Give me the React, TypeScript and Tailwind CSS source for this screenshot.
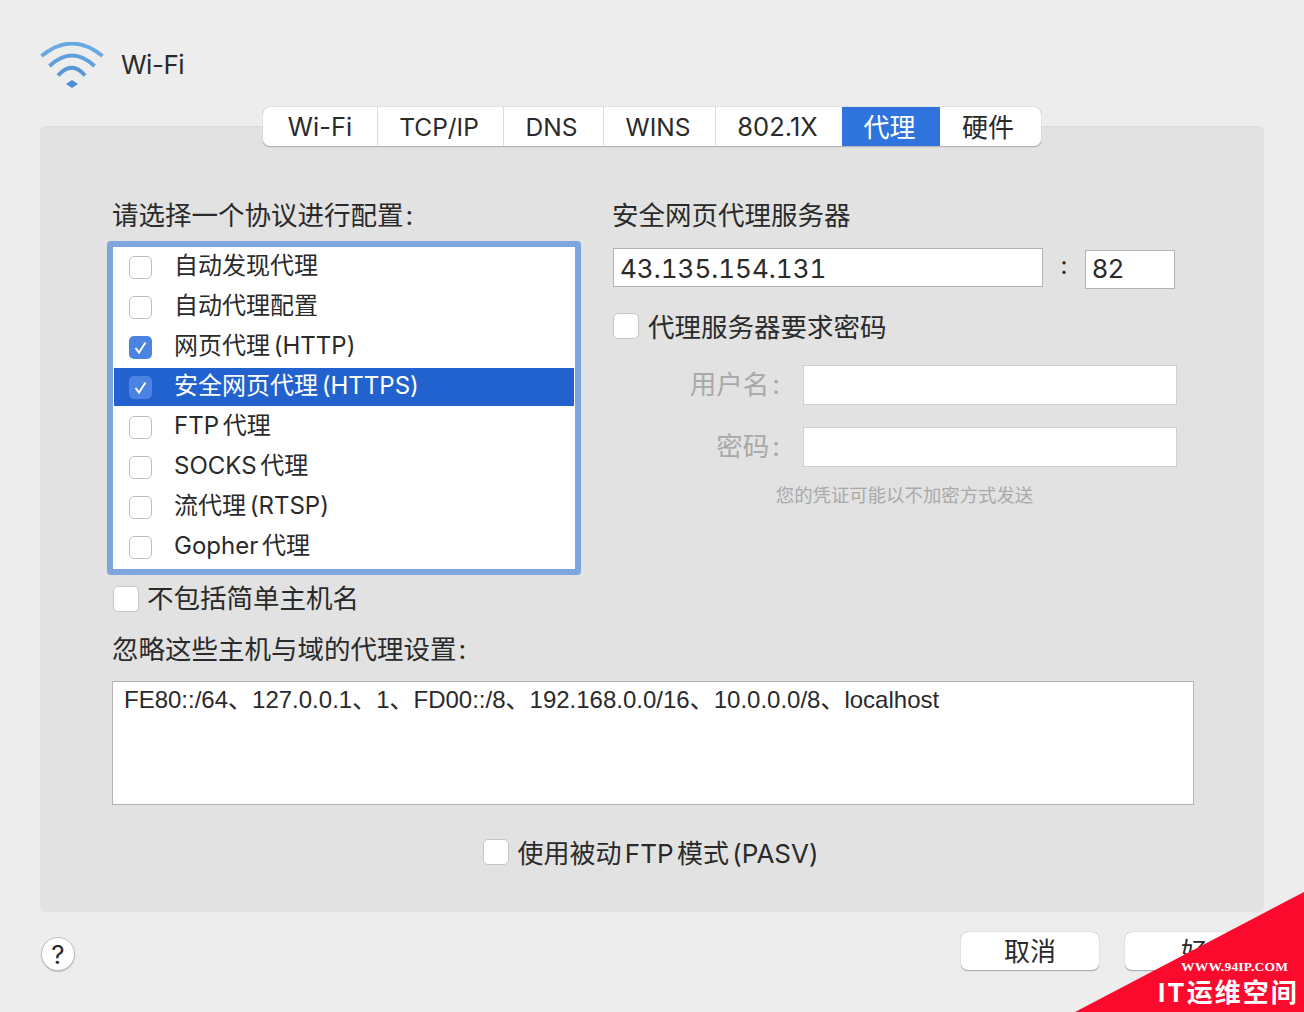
const tabs = [
  { label: 'Wi-Fi', width: 'w-[114px]', size: 'text-[25.5px]' },
  { label: 'TCP/IP', width: 'w-[126px] pr-[3px]', size: 'text-[24.5px]' },
  { label: 'DNS', width: 'w-[100px] pr-[4px]', size: 'text-[24.5px]' },
  { label: 'WINS', width: 'w-[112px] pr-[3px]', size: 'text-[24.5px]' },
  { label: '802.1X', width: 'w-[127px] pr-[3px]', size: 'text-[25.5px]' },
  { label: '代理', width: 'w-[98px] pr-[3px]', size: 'text-[26px]', active: true },
  { label: '硬件', width: 'w-[101px] pr-[5px]', size: 'text-[26px]' },
]

const protocols = [
  { label: '自动发现代理' },
  { label: '自动代理配置' },
  { label: '网页代理 (HTTP)', checked: true },
  { label: '安全网页代理 (HTTPS)', checked: true, selected: true },
  { label: 'FTP 代理' },
  { label: 'SOCKS 代理' },
  { label: '流代理 (RTSP)' },
  { label: 'Gopher 代理' },
]

function WifiIcon() {
  return (
    <svg width="64" height="46" viewBox="0 0 64 46" fill="none" className="shrink-0">
      <path d="M1.5 14 Q32 -11 62.5 14" stroke="#69a8e1" strokeWidth="3.8" />
      <path d="M9.5 24 Q32 3 54.5 24" stroke="#5f9fdb" strokeWidth="3.8" />
      <path d="M18 33.5 Q32 18 45 33.5" stroke="#5896d6" strokeWidth="3.8" />
      <path d="M26 42 L32 38 L38 42 L32 46Z" fill="#4d8cd2" />
    </svg>
  )
}

function ListCheck({ checked }: { checked?: boolean }) {
  if (checked) {
    return (
      <span className="flex h-[23px] w-[23px] shrink-0 items-center justify-center rounded-[5px] bg-[#4b83e2]">
        <svg width="15" height="15" viewBox="0 0 15 15" fill="none">
          <path d="M2.5 8 L6 12.5 L12.5 2.5" stroke="white" strokeWidth="1.9" />
        </svg>
      </span>
    )
  }
  return <span className="h-[23px] w-[23px] shrink-0 rounded-[5px] border border-[#bebebe] bg-white" />
}

function Checkbox() {
  return <span className="h-[26px] w-[26px] shrink-0 rounded-[5px] border border-[#c6c6c6] bg-white" />
}

export default function App() {
  return (
    <div className="relative h-[1012px] w-[1304px] overflow-hidden bg-[#ededed] font-[Inter,'Noto_Sans_CJK_SC',sans-serif] text-[#2a2a2a]">
      <header className="flex h-[126px] items-start gap-[17px] pl-[40px] pt-[42px]">
        <WifiIcon />
        <span className="text-[26px] leading-[46px] tracking-[-0.5px]">Wi-Fi</span>
      </header>

      <main className="mx-[40px] h-[786px] rounded-[6px] border-t border-[#dcdcdc] bg-[#e2e2e2] px-[73px]">
        <nav className="-mt-[20px] flex justify-center">
          <div className="flex h-[40px] overflow-hidden rounded-[7px] border-b border-[#b5b5b5] bg-white shadow-[0_0_1px_rgba(0,0,0,0.45)]">
            {tabs.map((tab, i) => (
              <span
                key={tab.label}
                className={`${tab.width} ${tab.size} flex items-center justify-center pt-[1px] ${
                  tab.active ? 'bg-[#2f74dc] text-white' : i > 0 && i < 5 ? 'border-l border-[#dcdcdc]' : ''
                }`}
              >
                {tab.label}
              </span>
            ))}
          </div>
        </nav>

        <div className="mt-[52px] flex">
          <section className="w-[500px]">
            <h2 className="-ml-[1px] h-[32px] text-[26.5px] font-normal leading-[32px]">
              请选择一个协议进行配置<span className="ml-[2px]">:</span>
            </h2>
            <div className="-ml-[6px] mt-[10px] h-[334px] w-[474px] rounded-[4px] border-[6px] border-[#7fa5de] bg-white">
              {protocols.map((p) => (
                <div
                  key={p.label}
                  className={`flex items-center gap-[22px] text-[24px] [word-spacing:-3px] ${
                    p.selected ? 'mx-[1px] my-[1px] h-[38px] bg-[#2262cf] pl-[15px] text-white' : 'h-[40px] pl-[16px]'
                  }`}
                >
                  <ListCheck checked={p.checked} />
                  <span className="whitespace-nowrap pb-[2px]">{p.label}</span>
                </div>
              ))}
            </div>
          </section>

          <section className="w-[564px]">
            <h2 className="-ml-[1px] h-[32px] text-[26.5px] font-normal leading-[32px]">安全网页代理服务器</h2>
            <div className="mt-[17px] flex items-start">
              <input
                readOnly
                value="43.135.154.131"
                className="h-[39px] w-[430px] border border-[#b4b4b4] bg-white px-[6px] pt-[1px] text-[26px] tabular-nums outline-none"
              />
              <span className="w-[42px] text-center text-[24px] leading-[36px]">:</span>
              <input
                readOnly
                value="82"
                className="mt-[2px] h-[39px] w-[90px] border border-[#b4b4b4] bg-white px-[6px] pb-[2px] text-[26px] outline-none"
              />
            </div>
            <label className="mt-[24px] flex h-[26px] items-start gap-[9px] text-[26.5px] leading-[26px]">
              <Checkbox />
              <span className="mt-[1px]">代理服务器要求密码</span>
            </label>
            <div className="mt-[26px] flex items-center">
              <span className="w-[167px] text-right text-[26.5px] text-[#a9a9a9]">
                用户名<span className="ml-[3px]">:</span>
              </span>
              <span className="ml-[23px] h-[40px] w-[374px] border border-[#cfcfcf] bg-white" />
            </div>
            <div className="mt-[22px] flex items-center">
              <span className="w-[167px] text-right text-[26.5px] text-[#a9a9a9]">
                密码<span className="ml-[3px]">:</span>
              </span>
              <span className="ml-[23px] h-[40px] w-[374px] border border-[#cfcfcf] bg-white" />
            </div>
            <p className="mt-[15px] w-[583px] text-center text-[18.4px] leading-[26px] text-[#a9a9a9]">
              您的凭证可能以不加密方式发送
            </p>
          </section>
        </div>

        <label className="mt-[11px] flex h-[26px] items-start gap-[9px] text-[26.5px] leading-[24px]">
          <Checkbox />
          <span className="-ml-[1px]">不包括简单主机名</span>
        </label>
        <h2 className="-ml-[1px] mt-[21px] h-[32px] text-[26.5px] font-normal leading-[32px]">
          忽略这些主机与域的代理设置<span className="ml-[2px]">:</span>
        </h2>
        <textarea
          readOnly
          value="FE80::/64、127.0.0.1、1、FD00::/8、192.168.0.0/16、10.0.0.0/8、localhost"
          className="-ml-[1px] mt-[16px] block h-[124px] w-[1082px] resize-none border border-[#b4b4b4] bg-white px-[11px] py-[3px] font-['Liberation_Sans','Noto_Sans_CJK_SC',sans-serif] text-[24px] leading-[30px] outline-none"
        />
        <label className="mt-[34px] flex h-[26px] items-start justify-center gap-[9px] pr-[3px] text-[26px] leading-[26px] [word-spacing:-4px]">
          <Checkbox />
          <span className="mt-[2px]">使用被动 FTP 模式 (PASV)</span>
        </label>
      </main>

      <footer className="flex items-start pl-[41px] pr-[41px] pt-[20px]">
        <span className="mt-[5px] flex h-[34px] w-[34px] items-center justify-center rounded-full border border-[#c0c0c0] bg-white text-[26px] shadow-[0_1px_1px_rgba(0,0,0,0.2)]">
          ?
        </span>
        <div className="ml-auto flex gap-[26px]">
          <button className="h-[39px] w-[138px] rounded-[7px] border-b border-[#b0b0b0] bg-white text-[26px] shadow-[0_0_1px_rgba(0,0,0,0.45)]">
            取消
          </button>
          <button className="h-[39px] w-[138px] rounded-[7px] border-b border-[#b0b0b0] bg-white text-[26px] shadow-[0_0_1px_rgba(0,0,0,0.45)]">
            好
          </button>
        </div>
      </footer>

      {/* watermark ribbon in the corner */}
      <svg width="229" height="120" viewBox="0 0 229 120" className="absolute bottom-0 right-0">
        <path d="M229 0 V120 H0Z" fill="#fb0a2e" />
      </svg>
      <span className="absolute left-[1181px] top-[959px] whitespace-nowrap font-['Liberation_Serif',serif] text-[13.5px] font-bold leading-[16px] tracking-[0.2px] text-white">
        WWW.94IP.COM
      </span>
      <span className="absolute left-[1158px] top-[975px] whitespace-nowrap text-[26px] font-bold leading-[36px] tracking-[2px] text-white">
        IT运维空间
      </span>
    </div>
  )
}
